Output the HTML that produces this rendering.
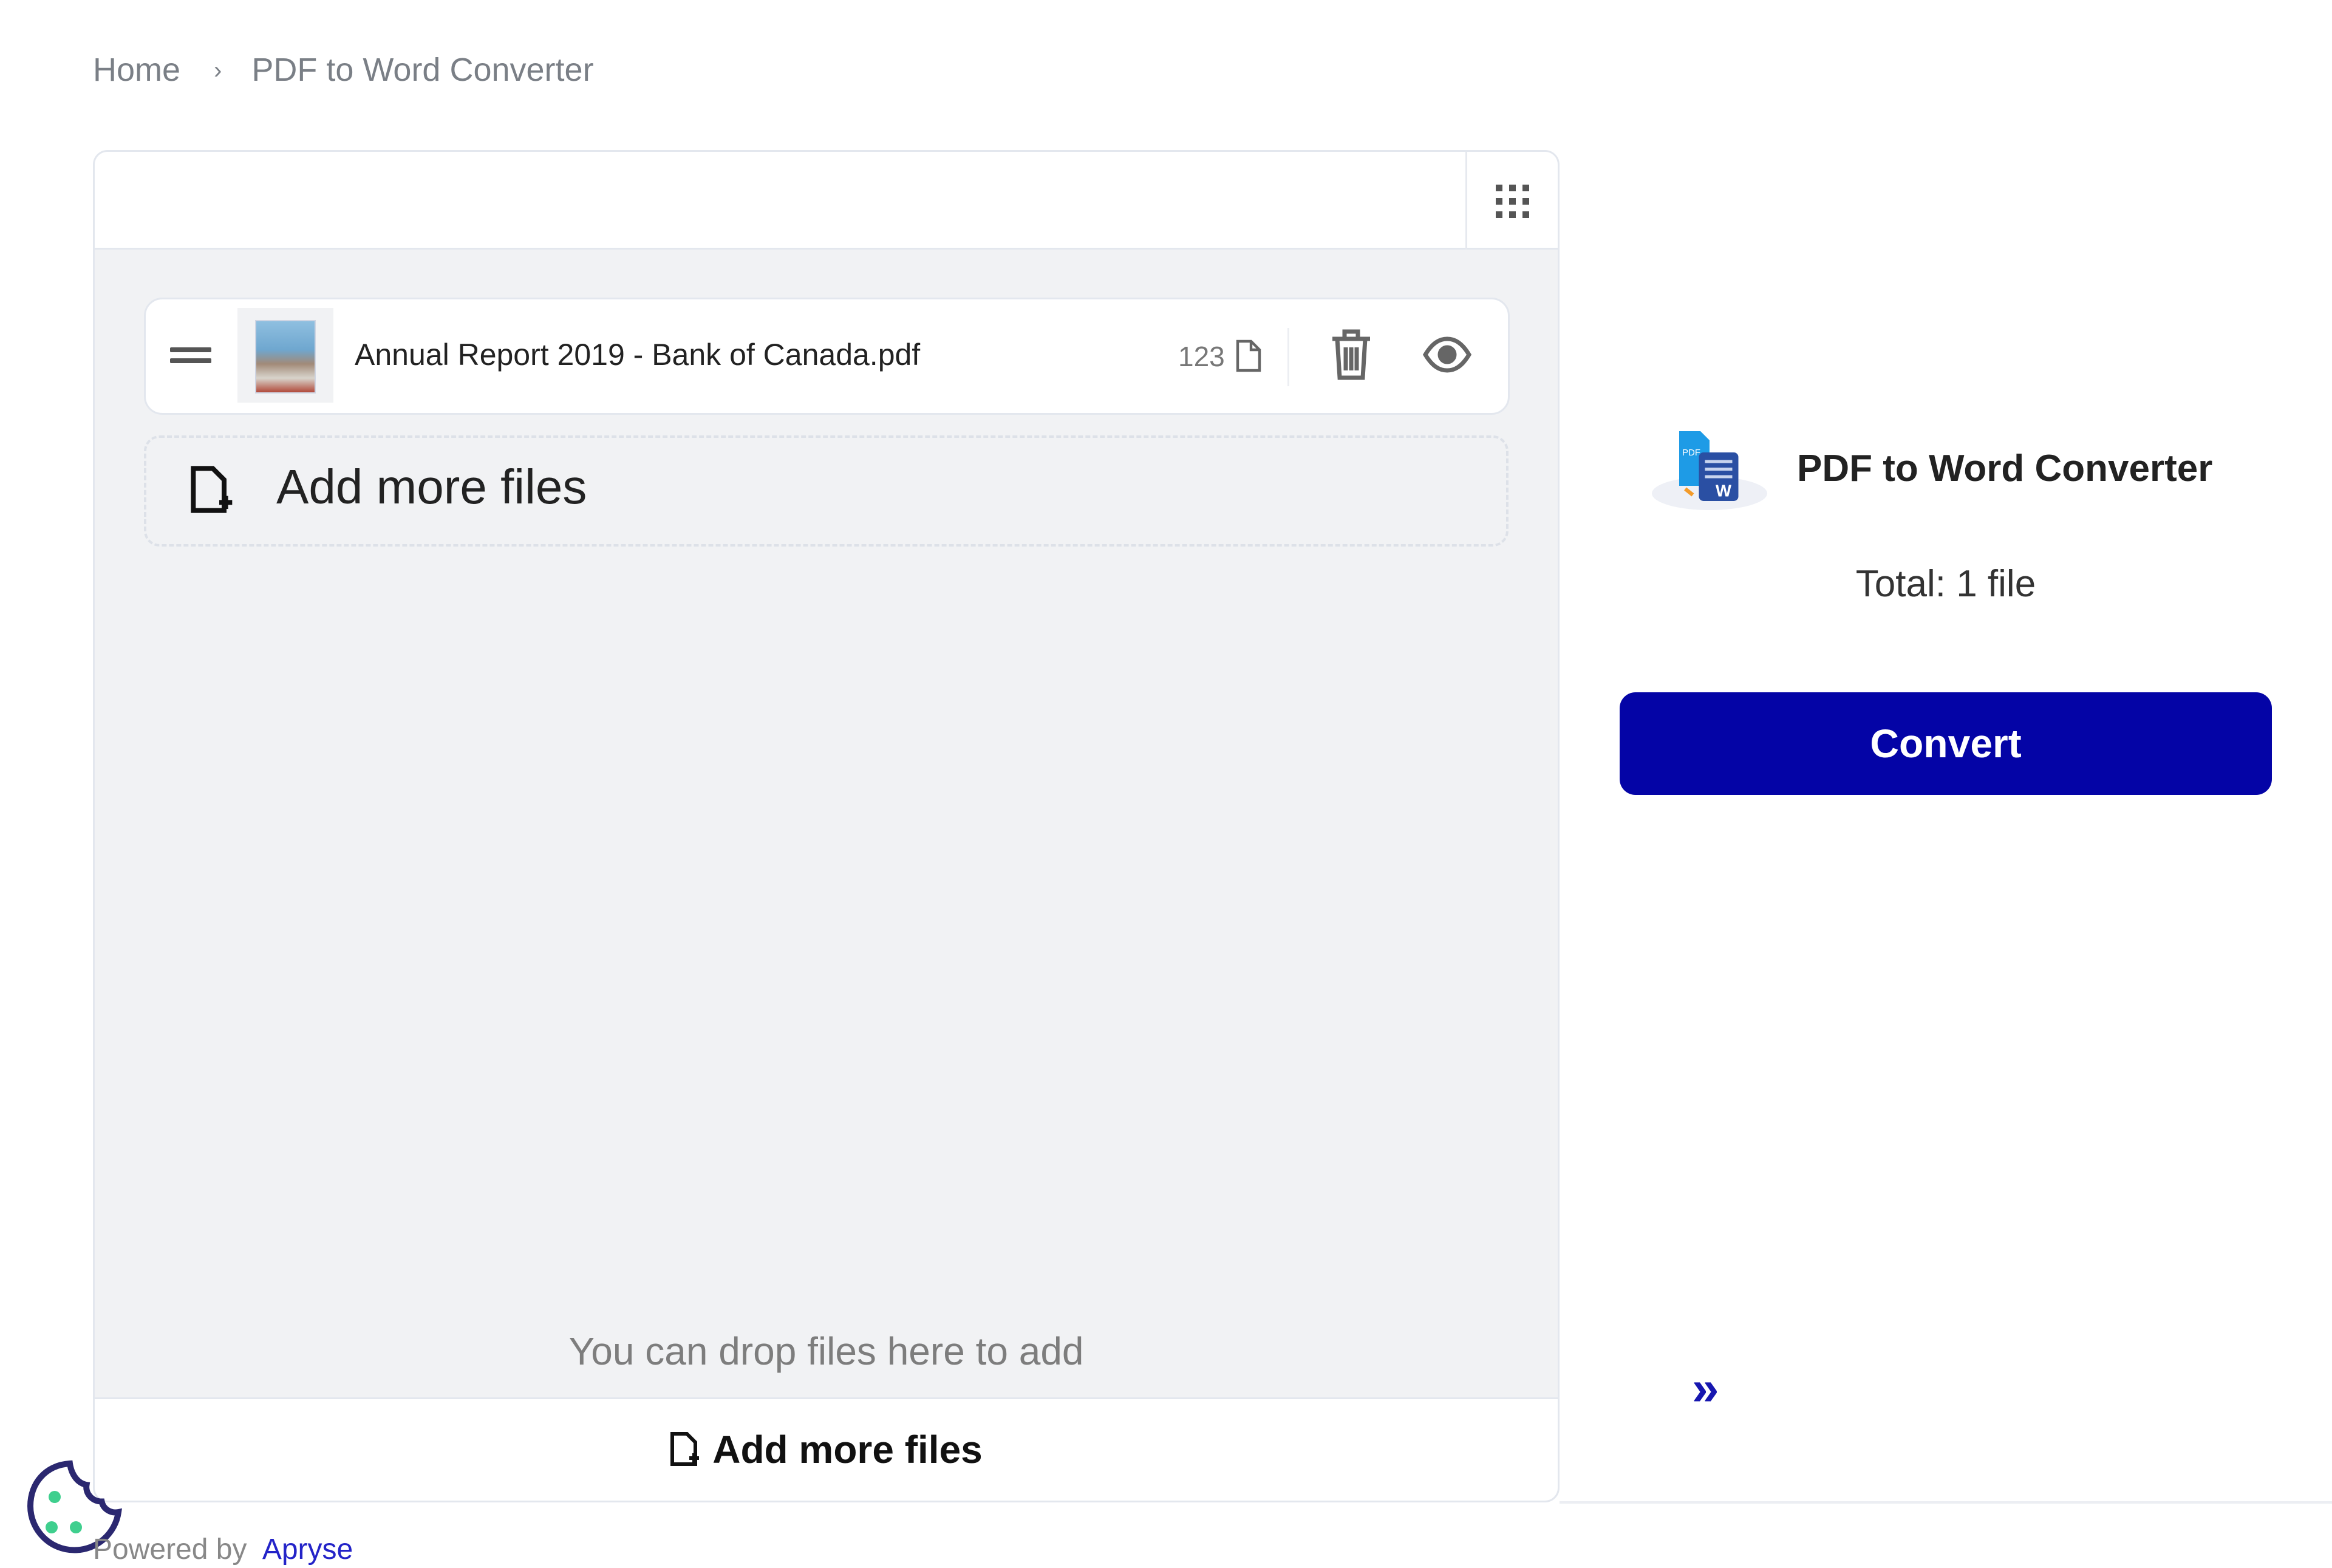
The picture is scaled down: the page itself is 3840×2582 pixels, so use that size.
<!DOCTYPE html>
<html><head><meta charset="utf-8"><style>
*{margin:0;padding:0;box-sizing:border-box}
body{width:3840px;height:2582px;background:#fff;font-family:"Liberation Sans",sans-serif;position:relative;overflow:hidden;color:#222}
.a{position:absolute;white-space:nowrap}
</style></head><body>
<div class="a" style="left:153px;top:84px;font-size:54px;color:#7a7f86">Home <span style="font-size:40px;margin:0 34px 0 40px;position:relative;top:-4px">›</span> PDF to Word Converter</div>

<div class="a" style="left:153px;top:247px;width:2415px;height:2227px;border:3px solid #e3e7ee;border-radius:24px;background:#f1f2f4;overflow:hidden">
  <div class="a" style="left:0;top:0;width:100%;height:161px;background:#fff;border-bottom:3px solid #e3e7ee"></div>
  <div class="a" style="left:2257px;top:0;width:3px;height:161px;background:#e6e9ef"></div>
  <svg class="a" style="left:2305px;top:52px" width="60" height="60" viewBox="0 0 60 60" fill="#555">
    <rect x="2" y="2" width="11" height="11"/><rect x="24" y="2" width="11" height="11"/><rect x="46" y="2" width="11" height="11"/>
    <rect x="2" y="24" width="11" height="11"/><rect x="24" y="24" width="11" height="11"/><rect x="46" y="24" width="11" height="11"/>
    <rect x="2" y="46" width="11" height="11"/><rect x="24" y="46" width="11" height="11"/><rect x="46" y="46" width="11" height="11"/>
  </svg>
  <div class="a" style="left:0;top:1938px;width:100%;text-align:center;font-size:64px;color:#7d7d7d">You can drop files here to add</div>
  <div class="a" style="left:0;top:2051px;width:100%;height:176px;background:#fff;border-top:3px solid #e3e7ee"></div>
  <div class="a" style="left:0;top:2100px;width:100%;text-align:center;font-size:64px;font-weight:bold;color:#111">
    <svg width="48" height="60" viewBox="0 0 24 30" style="vertical-align:-8px;margin-right:22px" fill="none" stroke="#111" stroke-width="3"><path d="M2 2h12l7 7v18H2z"/><path d="M16 22h8M20 18v8" stroke-width="3"/></svg>Add more files</div>
</div>

<div class="a" style="left:237px;top:490px;width:2249px;height:193px;background:#fff;border:3px solid #e3e7ee;border-radius:30px"></div>
<div class="a" style="left:280px;top:572px;width:68px;height:8px;background:#555;border-radius:2px"></div>
<div class="a" style="left:280px;top:590px;width:68px;height:8px;background:#555;border-radius:2px"></div>
<div class="a" style="left:391px;top:507px;width:158px;height:156px;background:#f1f2f4"></div>
<div class="a" style="left:420px;top:527px;width:100px;height:121px;border:2px solid #cfd5e3;background:linear-gradient(#8fbfe0 0%,#6fa7cf 40%,#a28a78 60%,#d8d4cc 80%,#b14a3a 100%)"></div>
<div class="a" style="left:584px;top:555px;font-size:50px;color:#222">Annual Report 2019 - Bank of Canada.pdf</div>
<div class="a" style="left:1940px;top:560px;font-size:46px;color:#777">123</div>
<svg class="a" style="left:2034px;top:558px" width="44" height="56" viewBox="0 0 22 28" fill="none" stroke="#666" stroke-width="2.2"><path d="M2 2h11l7 7v17H2z M13 2v7h7"/></svg>
<div class="a" style="left:2120px;top:540px;width:3px;height:96px;background:#eceef2"></div>
<svg class="a" style="left:2190px;top:540px" width="70" height="86" viewBox="0 0 35 43" fill="none" stroke="#666" stroke-width="3.5"><path d="M2 9h31M12 9V3h11v6M6 9l2 32h19l2-32M13 16v19M17.5 16v19M22 16v19"/></svg>
<svg class="a" style="left:2343px;top:552px" width="80" height="64" viewBox="0 0 40 32" fill="none" stroke="#666" stroke-width="3.5"><path d="M2 16C8 6 14 3 20 3s12 3 18 13C32 26 26 29 20 29S8 26 2 16z"/><circle cx="20" cy="16" r="6" fill="#666"/></svg>

<div class="a" style="left:237px;top:717px;width:2247px;height:183px;border:4px dashed #dde1e8;border-radius:26px"></div>
<svg class="a" style="left:313px;top:766px" width="72" height="80" viewBox="0 0 27 30" fill="none" stroke="#111" stroke-width="3"><path d="M2 2h12l7 7v19H2z"/><path d="M18 23h8M22 19v8"/></svg>
<div class="a" style="left:455px;top:756px;font-size:80px;color:#222">Add more files</div>

<svg class="a" style="left:2715px;top:705px" width="210" height="140" viewBox="0 0 84 56">
  <ellipse cx="40" cy="43" rx="38" ry="11" fill="#eef0f6"/>
  <path d="M20 2h14l6 6v30H20z" fill="#1e9be6"/><text x="22" y="18" font-size="6" fill="#fff" font-family="Liberation Sans">PDF</text>
  <rect x="33" y="16" width="26" height="32" rx="3" fill="#2a4fa3"/>
  <path d="M37 22h18M37 27h18M37 32h18" stroke="#c8d4ee" stroke-width="2"/>
  <text x="44" y="45" font-size="11" font-weight="bold" fill="#fff" font-family="Liberation Sans">W</text>
  <path d="M24 40l5 4" stroke="#f39b2a" stroke-width="2.5"/>
</svg>
<div class="a" style="left:2959px;top:736px;font-size:62px;font-weight:bold;color:#222">PDF to Word Converter</div>
<div class="a" style="left:2667px;top:926px;width:1074px;text-align:center;font-size:62px;color:#333">Total: 1 file</div>
<div class="a" style="left:2667px;top:1140px;width:1074px;height:169px;background:#0404a6;border-radius:26px;color:#fff;font-size:66px;font-weight:bold;text-align:center;line-height:169px">Convert</div>

<div class="a" style="left:2786px;top:2240px;font-size:80px;color:#1717b0;font-weight:bold">»</div>
<div class="a" style="left:2568px;top:2472px;width:1272px;height:4px;background:#eceef3"></div>

<svg class="a" style="left:40px;top:2400px" width="165" height="165" viewBox="0 0 66 66" fill="none">
  <path d="M30 4C14 5 4 17 4 32c0 16 13 29 29 29 15 0 27-11 29-25-5 1-10-2-11-7-6 0-11-5-10-11-6-1-10-7-11-14z" stroke="#2b2870" stroke-width="4"/>
  <circle cx="20" cy="26" r="4" fill="#3fcf8e"/><circle cx="18" cy="46" r="4" fill="#3fcf8e"/><circle cx="34" cy="46" r="4" fill="#3fcf8e"/>
</svg>
<div class="a" style="left:153px;top:2524px;font-size:48px;color:#888">Powered by <span style="color:#2323c8;margin-left:12px">Apryse</span></div>
</body></html>
